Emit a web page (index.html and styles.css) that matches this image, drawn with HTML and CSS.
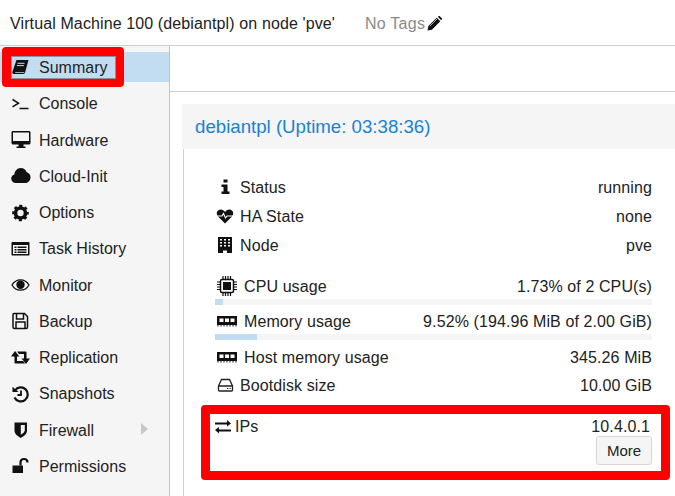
FILE: index.html
```
<!DOCTYPE html>
<html lang="en">
<head>
<meta charset="utf-8">
<title>Virtual Machine 100</title>
<link rel="stylesheet" href="styles.css">
</head>
<body>
<header class="top">
  <span class="vm-title">Virtual Machine 100 (debiantpl) on node 'pve'</span>
  <span class="tags">No Tags</span>
  <svg class="pencil" viewBox="0 0 16 16"><path d="M0.500 15.500l1-4.800L10.400 1.800l3.800 3.800-9 9zM11.500.9l.9-.7c.4-.3.900-.3 1.200 0l2.200 2.200c.3.300.3.800 0 1.200l-.7.900z" fill="#111"/><path d="M3 10.800l7.600-7.600" stroke="#fff" stroke-width=".7"/></svg>
</header>
<div class="main">
  <nav class="side">
    <a class="item selected"><span class="ic"><svg viewBox="0 0 18 18"><path d="M5 1h12l-3.400 12.600c-.3 1-.9 1.400-1.900 1.400H2.200C1 15 .6 14 1 12.600z M4 13c-.5 0-.5.8 0 .8h8.600l.3-.8z" fill="#111" fill-rule="evenodd"/><path d="M6 4.300h7M5.400 6.600h7" stroke="#c2ddf2" stroke-width="1"/></svg></span><span class="label">Summary</span></a>
    <a class="item"><span class="ic"><svg viewBox="0 0 18 18"><path d="M1 4.500l6 3.700-6 3.700M8 13.500h9" fill="none" stroke="#111" stroke-width="1.500"/></svg></span><span class="label">Console</span></a>
    <a class="item"><span class="ic"><svg viewBox="0 0 18 18"><path d="M1.500 0h16c.8 0 1.500.7 1.500 1.500V12c0 .8-.7 1.500-1.500 1.500H1.500C.7 13.500 0 12.800 0 12V1.500C0 .7.700 0 1.500 0zM1.500 1.500V10h16V1.500z M7 13.500h5v2h2v1.500H5v-1.500h2z" fill="#111" fill-rule="evenodd"/></svg></span><span class="label">Hardware</span></a>
    <a class="item"><span class="ic"><svg viewBox="0 0 18 18"><path d="M4.300 16C1.700 16-.3 14-.3 11.500c0-2 1.300-3.600 3.200-4.100C3.200 3.900 5.800 1 9.300 1c2.800 0 5.100 1.700 5.900 4.200 2.300.5 3.800 2.600 3.800 5 0 3.200-2.300 5.800-5 5.800z" fill="#111"/></svg></span><span class="label">Cloud-Init</span></a>
    <a class="item"><span class="ic"><svg viewBox="0 0 18 18"><circle cx="9" cy="9" r="5" fill="none" stroke="#111" stroke-width="3.600"/><circle cx="9" cy="9" r="7" fill="none" stroke="#111" stroke-width="2.600" stroke-dasharray="2.900 2.600" stroke-dashoffset="1.400"/></svg></span><span class="label">Options</span></a>
    <a class="item"><span class="ic"><svg viewBox="0 0 18 18"><path d="M1 2h16c.6 0 1 .4 1 1v11.500c0 .6-.4 1-1 1H1c-.6 0-1-.4-1-1V3c0-.6.400-1 1-1zM1.500 5v9h15V5z M3 6.500h2v1.500H3zM6 6.500h9v1.500H6zM3 9h2v1.500H3zM6 9h9v1.500H6zM3 11.500h2V13H3zM6 11.500h9V13H6z" fill="#111" fill-rule="evenodd"/></svg></span><span class="label">Task History</span></a>
    <a class="item"><span class="ic"><svg viewBox="0 0 18 18"><path d="M0.500 9C2.500 5.500 5.500 3.800 9 3.800s6.500 1.700 8.500 5.200c-2 3.500-5 5.200-8.500 5.200S2.500 12.500.500 9z" fill="none" stroke="#111" stroke-width="1.300"/><circle cx="9" cy="8.800" r="4.200" fill="#111"/></svg></span><span class="label">Monitor</span></a>
    <a class="item"><span class="ic"><svg viewBox="0 0 18 18"><path d="M2.500 1.500h10.500l3 3v10.500c0 .8-.4 1.500-1.300 1.500H2.800c-.8 0-1.300-.7-1.300-1.500V2.800c0-.8.400-1.300 1-1.300z" fill="none" stroke="#111" stroke-width="1.500"/><path d="M5 2v5h7V2M4.500 16v-6h9v6" fill="none" stroke="#111" stroke-width="1.500"/></svg></span><span class="label">Backup</span></a>
    <a class="item"><span class="ic"><svg viewBox="0 0 18 18"><path d="M3.500 2L8 7.500H5.500V12H11.500L13.500 14.500H3.800C3.300 14.500 3 14.200 3 13.700V7.500H-.5z M5.500 2.500H14.200C14.700 2.500 15 2.800 15 3.300V9.500H18.500L14.500 15 10 9.500H12.500V5H7.500z" fill="#111"/></svg></span><span class="label">Replication</span></a>
    <a class="item"><span class="ic"><svg viewBox="0 0 18 18"><path d="M3.500 5.500A7 7 0 1 1 3 12.500" fill="none" stroke="#111" stroke-width="2.200"/><path d="M1 1.800l6 5.200H1z" fill="#111"/><path d="M9.500 5.500V10H6" fill="none" stroke="#111" stroke-width="1.800"/></svg></span><span class="label">Snapshots</span></a>
    <a class="item"><span class="ic"><svg viewBox="0 0 18 18"><path d="M3 1.500h12.500v8c0 3.500-3.200 5.800-6.300 7.500C6.200 15.300 3 13 3 9.500z" fill="#111"/><path d="M9.300 4v9.800c2-1.100 4-2.600 4-4.700V4z" fill="#f5f5f5"/></svg></span><span class="label">Firewall</span><span class="arrow"></span></a>
    <a class="item"><span class="ic"><svg viewBox="0 0 18 18"><path d="M1 8.500h10.500v7.500H1z" fill="#111"/><path d="M9 8.500V5.500c0-2 1.500-3.500 3.500-3.500S16 3.500 16 5.500" fill="none" stroke="#111" stroke-width="2.200"/></svg></span><span class="label">Permissions</span></a>
  </nav>
  <section class="content">
    <div class="toolbar"></div>
    <div class="panel">
      <h2 class="panel-title">debiantpl (Uptime: 03:38:36)</h2>
      <div class="panel-body">
        <div class="stat">
          <span class="si"><svg viewBox="0 0 18 18"><path d="M6.500 1.500h4v3h-4zM4.500 6.500H10.500V13.500h2v2.500H4.500v-2.500H6.500V9H4.500z" fill="#111"/></svg></span><span class="k">Status</span><span class="v">running</span>
        </div>
        <div class="stat">
          <span class="si"><svg viewBox="0 0 18 18"><path d="M8 16.500L1 9.500C-1.500 6.500 0 2.500 3.700 2.500 5.500 2.500 7 3.500 8 5c1-1.500 2.500-2.500 4.300-2.500C16 2.500 17.500 6.500 15 9.500z" fill="#111"/><path d="M0 9h5l1.500-2.500 2 4.500 1.500-2h6" fill="none" stroke="#fff" stroke-width="1.100"/></svg></span><span class="k">HA State</span><span class="v">none</span>
        </div>
        <div class="stat">
          <span class="si"><svg viewBox="0 0 18 18"><path d="M1 1h14v16H10v-2.500H6V17H1z" fill="#111"/><path d="M3 3h2v1.500H3zM7 3h2v1.500H7zM11 3h2v1.500h-2zM3 6h2v1.500H3zM7 6h2v1.500H7zM11 6h2v1.500h-2zM3 9h2v1.500H3zM7 9h2v1.500H7zM11 9h2v1.500h-2z" fill="#fff"/></svg></span><span class="k">Node</span><span class="v">pve</span>
        </div>
        <div class="stat meter first">
          <span class="si wide"><svg viewBox="0 0 20 20"><rect x="3.500" y="3.500" width="13" height="13" rx="1.500" fill="none" stroke="#111" stroke-width="1.500"/><rect x="6" y="6" width="8" height="8" fill="#111"/><path d="M6 0v3M8.500 0v3M11 0v3M13.500 0v3M6 17v3M8.500 17v3M11 17v3M13.500 17v3M0 6h3M0 8.500h3M0 11h3M0 13.500h3M17 6h3M17 8.500h3M17 11h3M17 13.500h3" stroke="#111" stroke-width="1.200"/></svg></span><span class="k">CPU usage</span><span class="v">1.73% of 2 CPU(s)</span>
        </div>
        <div class="bar"><div class="fill" style="width:1.730%"></div></div>
        <div class="stat meter">
          <span class="si wide"><svg viewBox="0 0 20 20"><path d="M0 5h20v9H0z" fill="#111"/><path d="M2.500 7.500h4v3.500h-4zM8 7.500h4v3.500H8zM13.500 7.500h4v3.500h-4z" fill="#fff"/><path d="M1 14v1.500M4 14v1.500M7 14v1.500M10 14v1.500M13 14v1.500M16 14v1.500M19 14v1.500" stroke="#111"/></svg></span><span class="k">Memory usage</span><span class="v">9.52% (194.96 MiB of 2.00 GiB)</span>
        </div>
        <div class="bar"><div class="fill" style="width:9.520%"></div></div>
        <div class="stat host">
          <span class="si wide"><svg viewBox="0 0 20 20"><path d="M0 5h20v9H0z" fill="#111"/><path d="M2.500 7.500h4v3.500h-4zM8 7.500h4v3.500H8zM13.500 7.500h4v3.500h-4z" fill="#fff"/><path d="M1 14v1.500M4 14v1.500M7 14v1.500M10 14v1.500M13 14v1.500M16 14v1.500M19 14v1.500" stroke="#111"/></svg></span><span class="k">Host memory usage</span><span class="v">345.26 MiB</span>
        </div>
        <div class="stat">
          <span class="si"><svg viewBox="0 0 18 18"><path d="M1.500 10L4.500 3.500h8l3 6.500v4c0 .6-.4 1-1 1h-12c-.6 0-1-.4-1-1z M1.500 10h14" fill="none" stroke="#222" stroke-width="1.300"/><path d="M10 12.500h1.300M12.500 12.500h1.300" stroke="#222" stroke-width="1.200"/></svg></span><span class="k">Bootdisk size</span><span class="v">10.00 GiB</span>
        </div>
        <div class="stat ips">
          <span class="si ip"><svg viewBox="0 0 16 16"><path d="M0 4.500h12V2l4 3.500-4 3v-2H0z M16 9.500v2H4V9L0 12l4 3.500v-2h12z" fill="#111"/></svg></span><span class="k">IPs</span><span class="v ip-value">10.4.0.1</span>
        </div>
        <div class="more-row"><button class="more" type="button">More</button></div>
      </div>
    </div>
  </section>
</div>
<div class="mark mark-summary"></div>
<div class="mark-inner"></div>
<div class="mark mark-ips"></div>
</body>
</html>
```
FILE: styles.css
```
* { box-sizing: border-box; }
html, body { margin: 0; height: 496px; overflow: hidden; background: #fff; }
body { font: 16px/19px "Liberation Sans", Arial, sans-serif; color: #222; position: relative; }
.top { height: 46px; border-bottom: 1px solid #cfcfcf; display: flex; align-items: center; padding: 2px 0 0 10px; }
.vm-title { color: #222; letter-spacing: .115px; }
.tags { color: #8a8a8a; margin-left: 30px; letter-spacing: .25px; }
.pencil { width: 15px; height: 15px; margin-left: 2px; }
.main { display: flex; height: 450px; }
.side { width: 170px; background: #f5f5f5; border-right: 1px solid #c4c4c4; padding-top: 6px; display: flex; flex-direction: column; gap: 6.250px; flex: none; }
.item { height: 30px; display: flex; align-items: center; padding-left: 11px; color: #222; position: relative; flex: none; }
.item.selected { background: #c2ddf2; padding-top: 1.200px; margin-bottom: .6px; }
.ic { width: 19px; height: 18px; display: block; flex: none; margin-right: 9px; }
.ic svg, .si svg { display: block; width: 100%; height: 100%; overflow: visible; }
.arrow { position: absolute; left: 141px; top: 8px; border-left: 7px solid #c8c8c8; border-top: 6.500px solid transparent; border-bottom: 6.500px solid transparent; }
.content { flex: 1; min-width: 0; }
.toolbar { height: 46px; border-bottom: 1px solid #cfcfcf; }
.panel { margin: 12px 0 0 12px; }
.panel-title { margin: 0; height: 45px; background: #f5f5f5; color: #1a82d4; font-size: 18.670px; font-weight: 400; line-height: 45px; padding-left: 13px; }
.panel-body { margin-left: 1px; border-left: 1px solid #cfcfcf; height: 347px; padding: 28px 23px 0 31px; }
.stat { display: flex; align-items: center; height: 20px; margin-bottom: 9px; letter-spacing: .1px; }
.si { width: 18px; height: 18px; flex: none; margin: 0 5px 0 2px; }
.si.wide { width: 20px; height: 20px; margin: 0 7px 0 2px; }
.si.ip { width: 16px; height: 16px; margin: 0 4px 0 0; }
.k { flex: 1; }
.v { white-space: nowrap; }
.ip-value { padding-right: 2px; }
.meter { margin-bottom: 3px; }
.meter.first { margin-top: 21px; }
.bar { height: 6px; background: #f5f5f5; margin-bottom: 6px; }
.fill { height: 100%; background: #c2ddf2; }
.host { margin-top: 7px; margin-bottom: 8px; }
.ips { margin-top: 21px; margin-bottom: 0; }
.more-row { display: flex; justify-content: flex-end; margin-top: 0; }
.more { width: 56px; height: 29px; border: 1px solid #d8d8d8; border-radius: 3px; background: #f5f5f5; color: #222; font: 15px "Liberation Sans", Arial, sans-serif; padding: 0; }
.mark { position: absolute; border: 9px solid #f00; border-radius: 4px; }
.mark-summary { left: 2px; top: 47px; width: 122px; height: 40px; }
.mark-inner { position: absolute; left: 11px; top: 56px; width: 105px; height: 23px; border: 1px solid #8f8f9f; }
.mark-ips { left: 201px; top: 405px; width: 469px; height: 75px; }
```
